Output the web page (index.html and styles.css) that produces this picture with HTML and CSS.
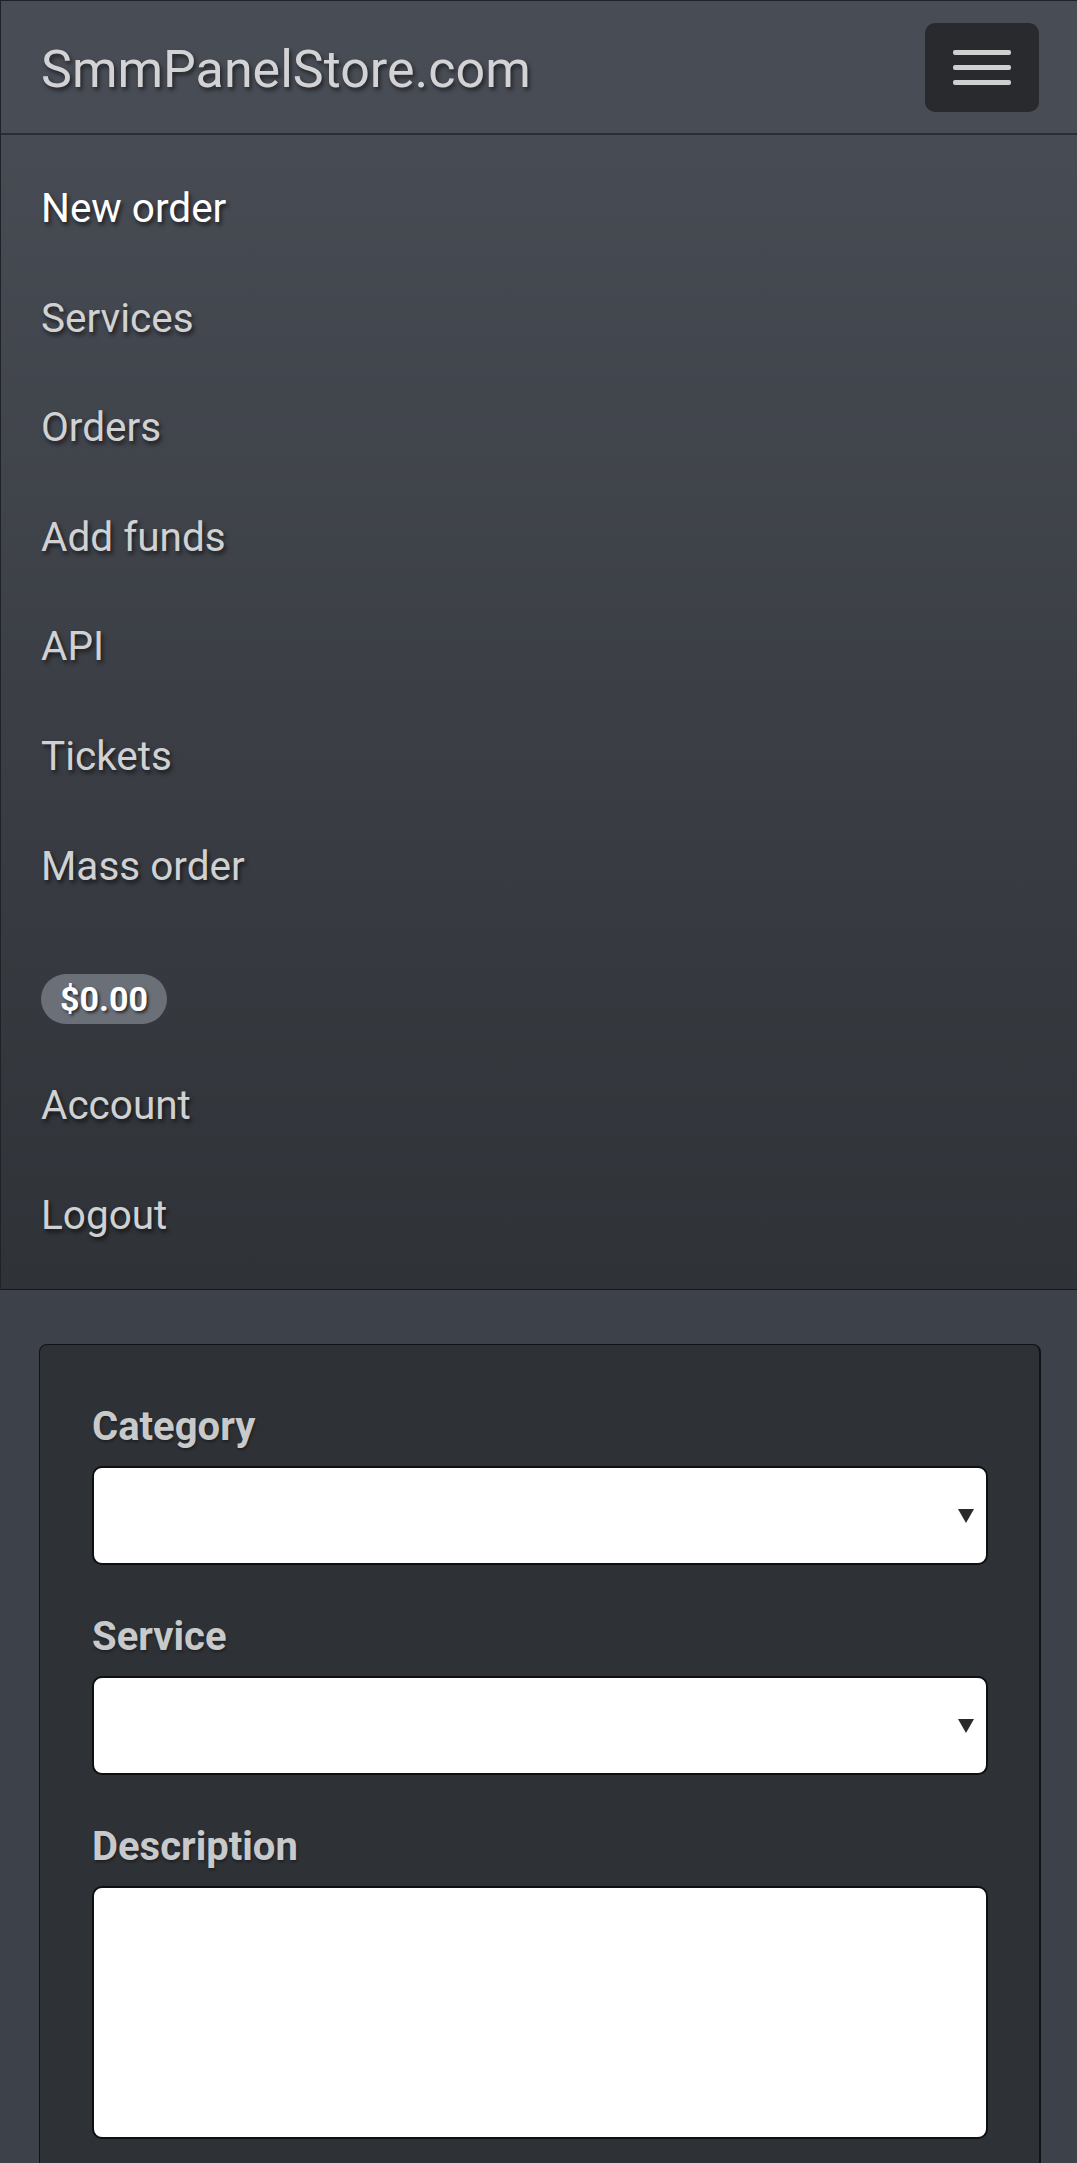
FILE: index.html
```html
<!DOCTYPE html>
<html lang="en">
<head>
<meta charset="utf-8">
<title>SmmPanelStore.com</title>
<link rel="stylesheet" href="styles.css">
</head>
<body>
<header class="site-header">
  <div class="topbar">
    <a class="brand" href="#">SmmPanelStore.com</a>
    <button class="toggler" type="button" aria-label="Toggle navigation">
      <span class="toggler-line"></span>
      <span class="toggler-line"></span>
      <span class="toggler-line"></span>
    </button>
  </div>
  <nav class="menu">
    <ul class="menu-list">
      <li><a class="menu-link active" href="#">New order</a></li>
      <li><a class="menu-link" href="#">Services</a></li>
      <li><a class="menu-link" href="#">Orders</a></li>
      <li><a class="menu-link" href="#">Add funds</a></li>
      <li><a class="menu-link" href="#">API</a></li>
      <li><a class="menu-link" href="#">Tickets</a></li>
      <li><a class="menu-link" href="#">Mass order</a></li>
      <li class="menu-balance"><span class="badge">$0.00</span></li>
      <li><a class="menu-link" href="#">Account</a></li>
      <li><a class="menu-link" href="#">Logout</a></li>
    </ul>
  </nav>
</header>
<main class="content">
  <div class="card">
    <form class="order-form">
      <div class="form-group">
        <label class="form-label" for="category">Category</label>
        <div class="select-wrap">
          <select class="form-control" id="category"></select>
        </div>
      </div>
      <div class="form-group">
        <label class="form-label" for="service">Service</label>
        <div class="select-wrap">
          <select class="form-control" id="service"></select>
        </div>
      </div>
      <div class="form-group">
        <label class="form-label" for="description">Description</label>
        <textarea class="form-control textarea" id="description"></textarea>
      </div>
    </form>
  </div>
</main>
</body>
</html>
```

FILE: styles.css
```css
* {
  box-sizing: border-box;
}

body {
  margin: 0;
  background: #3d4149;
  font-family: Roboto, "Noto Sans", "Liberation Sans", sans-serif;
}

.site-header {
  border-top: 1px solid #1f2227;
  border-left: 1px solid #1f2227;
}

.topbar {
  height: 134px;
  display: flex;
  align-items: center;
  justify-content: space-between;
  padding: 0 38px 0 40px;
  background: #484c55;
  border-bottom: 2px solid #2a2d32;
}

.brand {
  font-size: 52px;
  line-height: 1;
  padding-top: 6px;
  color: #d3d3d5;
  text-decoration: none;
  text-shadow: 2px 3px 4px rgba(0, 0, 0, 0.55);
}

.toggler {
  width: 114px;
  height: 89px;
  background: #282a2d;
  border: 0;
  border-radius: 10px;
  display: flex;
  flex-direction: column;
  align-items: center;
  justify-content: center;
  gap: 10px;
  padding: 0;
}

.toggler-line {
  display: block;
  width: 58px;
  height: 5px;
  border-radius: 2px;
  background: #cfcfd0;
}

.menu {
  background: linear-gradient(to bottom, #474b53 0%, #2f3237 100%);
  padding: 19px 0 19px 40px;
  border-bottom: 1px solid #16181b;
}

.menu-list {
  list-style: none;
  margin: 0;
  padding: 0;
}

.menu-link {
  display: block;
  height: 109.6px;
  line-height: 109.6px;
  font-size: 40.5px;
  color: #d0d1d3;
  text-decoration: none;
  text-shadow: 2px 3px 4px rgba(0, 0, 0, 0.6);
}

.menu-link.active {
  color: #ffffff;
}

.menu-balance {
  padding: 53px 0 27px;
  height: 130px;
}

.badge {
  display: inline-block;
  height: 50px;
  line-height: 50px;
  padding: 0 19px;
  border-radius: 25px;
  background: #6b7078;
  color: #ffffff;
  font-size: 34px;
  font-weight: 700;
  text-shadow: 2px 2px 3px rgba(0, 0, 0, 0.6);
}

.content {
  padding: 54px 36px 0 39px;
}

.card {
  background: #2e3135;
  border: 1px solid #121315;
  border-right-width: 2px;
  border-radius: 8px;
  padding: 57px 51px 120px 52px;
}

.form-group {
  margin-bottom: 47px;
}

.form-label {
  display: block;
  font-size: 40px;
  font-weight: 700;
  line-height: 50px;
  color: #c8c9cb;
  margin-bottom: 14px;
  text-shadow: 1px 2px 3px rgba(0, 0, 0, 0.35);
}

.select-wrap {
  position: relative;
}

.select-wrap::after {
  content: "";
  position: absolute;
  right: 14px;
  top: 43px;
  width: 0;
  height: 0;
  border-left: 8px solid transparent;
  border-right: 8px solid transparent;
  border-top: 14px solid #2b2b2c;
  pointer-events: none;
}

.form-control {
  display: block;
  width: 100%;
  height: 99px;
  background: #ffffff;
  border: 2px solid #0e0f11;
  border-radius: 10px;
  -webkit-appearance: none;
  appearance: none;
  font-family: inherit;
  font-size: 36px;
  padding: 0 20px;
  margin: 0;
}

.textarea {
  height: 253px;
  resize: none;
  padding: 16px 20px;
}
```
